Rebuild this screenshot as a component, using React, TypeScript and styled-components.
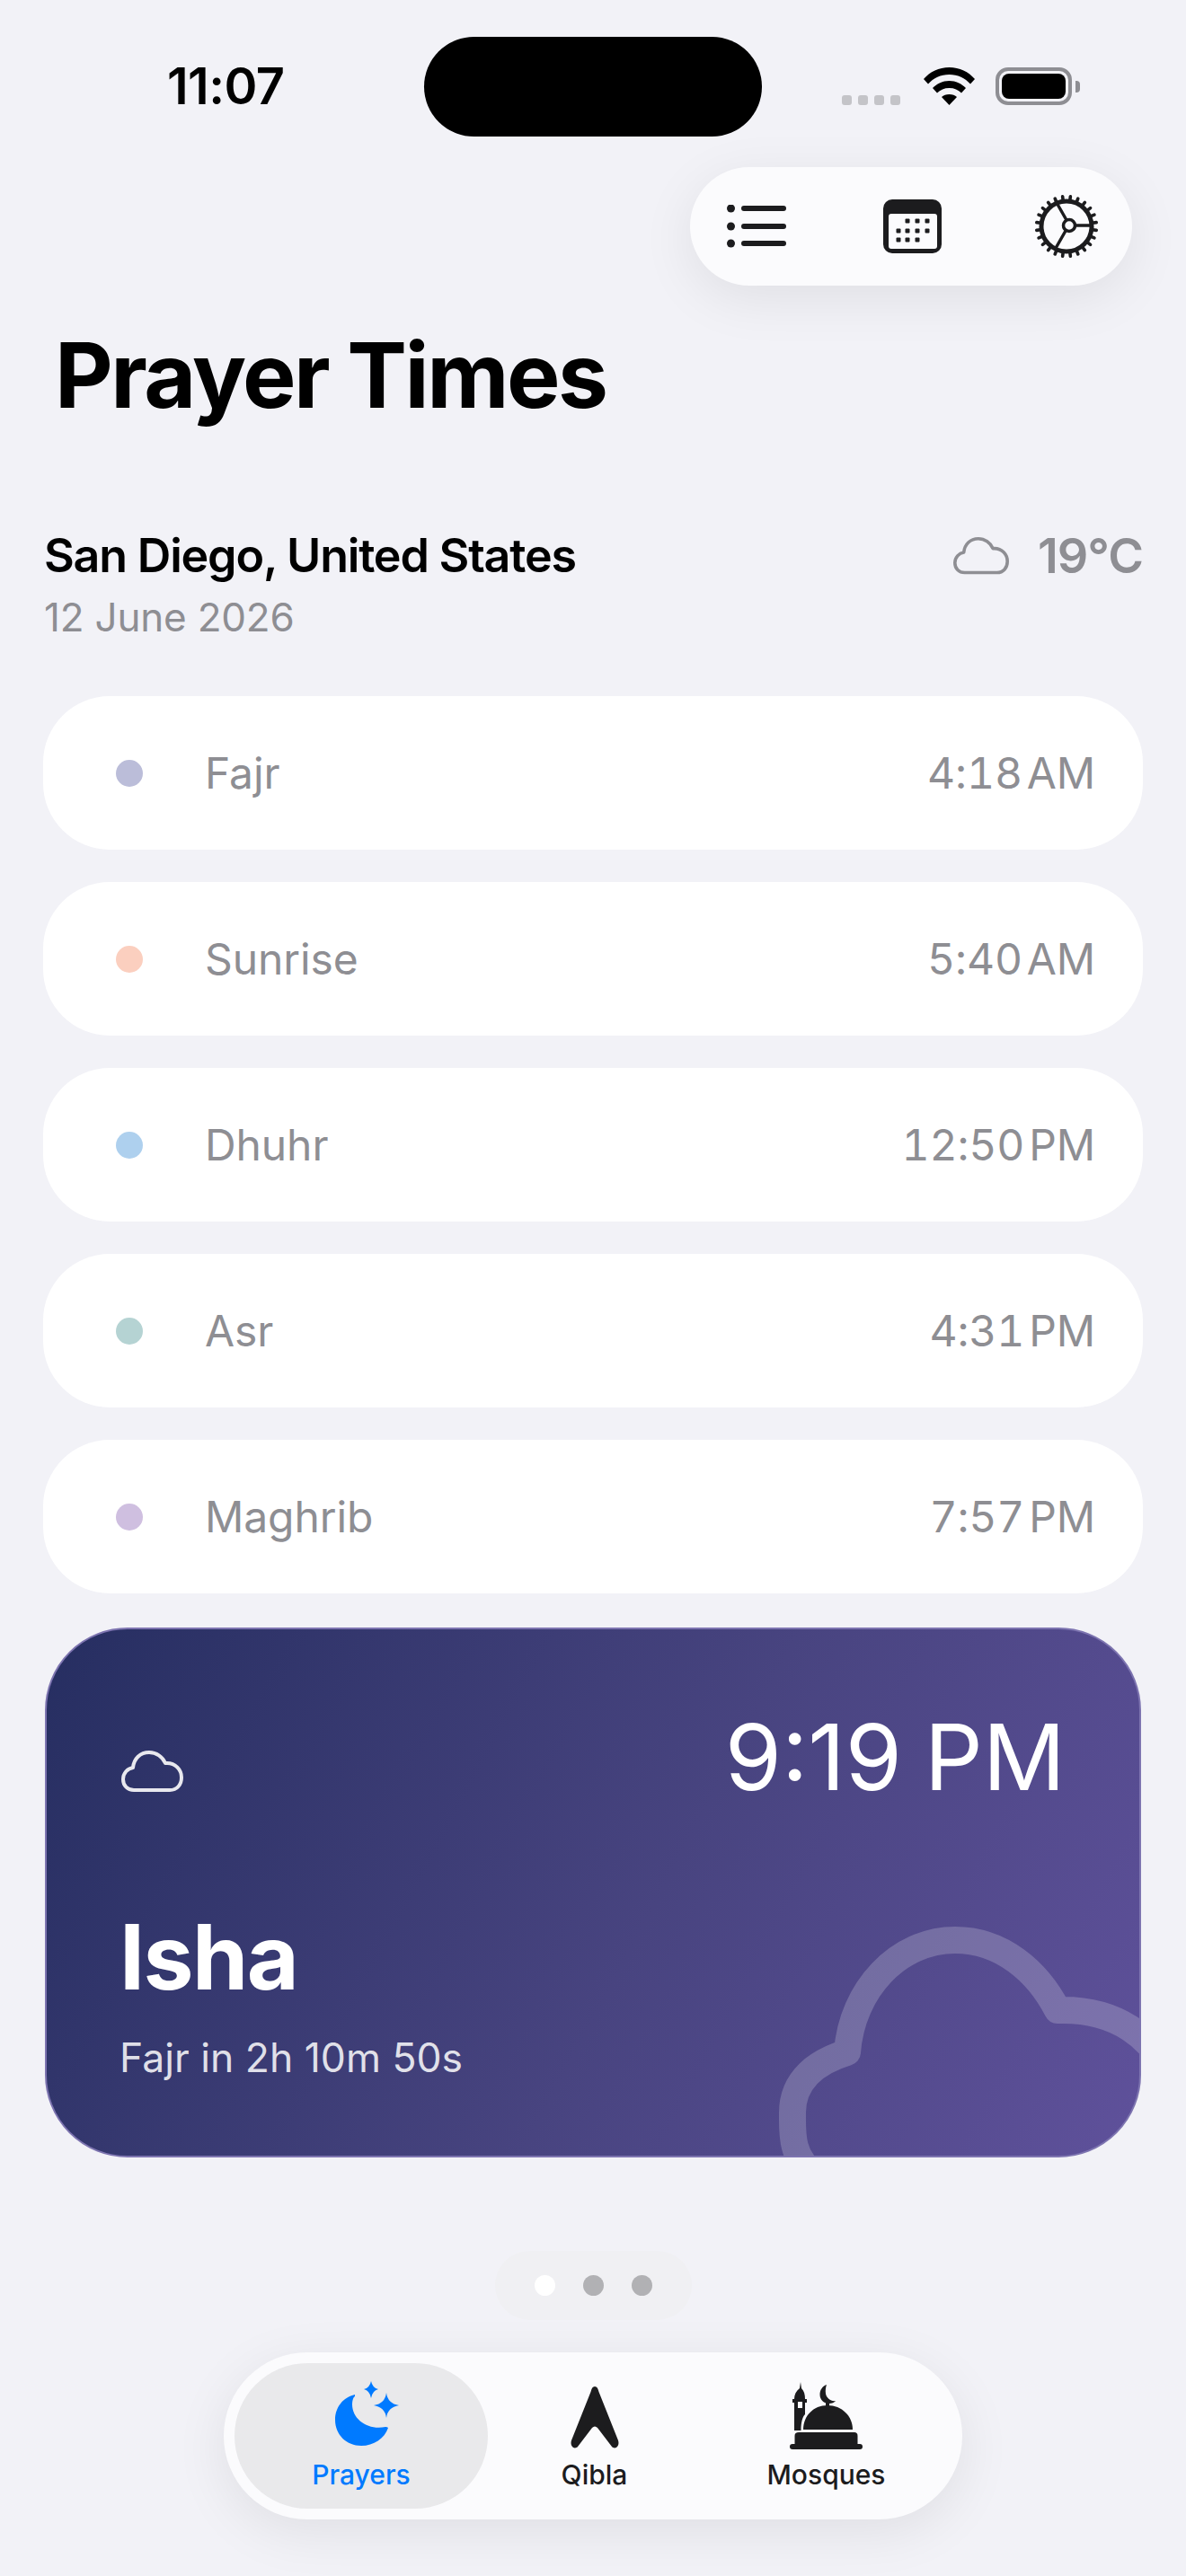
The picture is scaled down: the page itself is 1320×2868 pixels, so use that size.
import React from "react";
import styled, { createGlobalStyle } from "styled-components";

const Global = createGlobalStyle`
  html, body { margin: 0; padding: 0; background: #f2f2f7; }
  * { box-sizing: border-box; }
  #root { width: 1320px; }
`;

const Page = styled.div`
  width: 1320px;
  height: 2868px;
  overflow: hidden;
  background: #f2f2f7;
  font-family: Inter, "Liberation Sans", sans-serif;
  color: #000;
`;

const StatusBar = styled.header`
  display: flex;
  align-items: flex-start;
  height: 186px;
  padding: 41px 0 0 186px;
`;

const Clock = styled.div`
  width: 286px;
  margin-top: 28px;
  font-size: 56px;
  line-height: 54px;
  font-weight: 600;
  letter-spacing: -0.6px;
`;

const Island = styled.div`
  width: 376px;
  height: 111px;
  border-radius: 56px;
  background: #000;
`;

const StatusIcons = styled.div`
  display: flex;
  align-items: flex-end;
  margin: 34px 0 0 89px;
  height: 42px;
`;

const Signal = styled.div`
  display: flex;
  gap: 7px;
  margin-right: 26px;
`;

const SignalDot = styled.span`
  width: 11px;
  height: 11px;
  border-radius: 3px;
  background: #c4c4c8;
`;

const Battery = styled.div`
  position: relative;
  width: 85px;
  height: 42px;
  margin-left: 23px;
  padding: 3px;
  border: 4px solid #8e8e93;
  border-radius: 14px;
  &::after {
    content: "";
    position: absolute;
    right: -13px;
    top: 11px;
    width: 5px;
    height: 13px;
    border-radius: 0 4px 4px 0;
    background: #8e8e93;
  }
`;

const BatteryFill = styled.div`
  width: 100%;
  height: 100%;
  border-radius: 8px;
  background: #000;
`;

const ToolbarRow = styled.div`
  display: flex;
  justify-content: flex-end;
  padding-right: 60px;
`;

const Toolbar = styled.nav`
  display: grid;
  grid-template-columns: 148px 198px 146px;
  align-items: center;
  justify-items: center;
  width: 492px;
  height: 132px;
  border-radius: 66px;
  background: #fbfbfd;
  box-shadow: 0 14px 60px rgba(0, 0, 0, 0.08);
`;

const Title = styled.h1`
  margin: 33px 0 0 61px;
  font-size: 100px;
  line-height: 134px;
  font-weight: 700;
  letter-spacing: -2.5px;
`;

const LocationRow = styled.section`
  display: flex;
  justify-content: space-between;
  align-items: flex-start;
  margin-top: 104px;
  padding: 0 48px 0 49px;
`;

const City = styled.div`
  font-size: 52px;
  line-height: 60px;
  font-weight: 600;
  letter-spacing: -1.2px;
`;

const DateText = styled.div`
  margin-top: 11px;
  font-size: 44px;
  line-height: 54px;
  font-weight: 400;
  letter-spacing: -0.2px;
  color: #8e8e93;
`;

const Weather = styled.div`
  display: flex;
  align-items: center;
  gap: 32px;
  color: #8e8e93;
  font-size: 54px;
  line-height: 60px;
  font-weight: 600;
  letter-spacing: -1px;
`;

const PrayerList = styled.main`
  display: flex;
  flex-direction: column;
  gap: 36px;
  margin-top: 61px;
  padding: 0 48px;
`;

const Row = styled.div`
  display: flex;
  align-items: center;
  height: 171px;
  padding: 0 53px 0 81px;
  border-radius: 74px;
  background: #fff;
`;

const Dot = styled.span<{ $color: string }>`
  width: 30px;
  height: 30px;
  border-radius: 50%;
  background: ${(p) => p.$color};
`;

const RowName = styled.span`
  margin-left: 69px;
  flex: 1;
  font-size: 48px;
  letter-spacing: -0.1px;
  color: #8e8e93;
`;

const RowTime = styled.span`
  font-size: 48px;
  letter-spacing: -0.1px;
  color: #8e8e93;
  font-variant-numeric: tabular-nums;
  word-spacing: -8px;
`;

const Card = styled.section`
  position: relative;
  display: flex;
  flex-direction: column;
  height: 590px;
  margin: 38px 50px 0;
  padding: 81px 82px 0 81px;
  overflow: hidden;
  border: 2px solid #7d74b0;
  border-radius: 92px;
  background: linear-gradient(118deg, #262e61 0%, #484480 55%, #5f519b 100%);
  color: #fff;
`;

const CardTop = styled.div`
  display: flex;
  justify-content: space-between;
  align-items: flex-end;
`;

const CardCloud = styled.div`
  display: flex;
  margin: 0 0 22px 2px;
`;

const CardTime = styled.div`
  font-size: 102px;
  line-height: 122px;
  font-weight: 400;
  word-spacing: -4px;
`;

const CardName = styled.div`
  margin-top: 102px;
  font-size: 100px;
  line-height: 120px;
  font-weight: 700;
  letter-spacing: -1.5px;
`;

const CardNote = styled.div`
  margin-top: 25px;
  font-size: 44.5px;
  line-height: 54px;
  color: rgba(255, 255, 255, 0.85);
`;

const BigCloud = styled.svg`
  position: absolute;
  right: -2px;
  bottom: -2px;
`;

const PagerRow = styled.div`
  display: flex;
  justify-content: center;
  margin-top: 104px;
`;

const Pager = styled.div`
  display: flex;
  align-items: center;
  justify-content: center;
  gap: 31px;
  width: 219px;
  height: 77px;
  border-radius: 39px;
  background: #f0f0f3;
`;

const PagerDot = styled.span<{ $on?: boolean }>`
  width: 23px;
  height: 23px;
  border-radius: 50%;
  background: ${(p) => (p.$on ? "#ffffff" : "#b1b1b4")};
`;

const NavRow = styled.div`
  display: flex;
  justify-content: center;
  margin-top: 36px;
`;

const Nav = styled.nav`
  display: grid;
  grid-template-columns: 282px 237px 279px;
  align-items: stretch;
  width: 822px;
  height: 186px;
  padding: 12px;
  border-radius: 93px;
  background: #fbfbfd;
  box-shadow: 0 14px 60px rgba(0, 0, 0, 0.08);
`;

const Tab = styled.div<{ $active?: boolean }>`
  display: flex;
  flex-direction: column;
  align-items: center;
  padding-top: 16px;
  border-radius: 81px;
  background: ${(p) => (p.$active ? "#e9e9eb" : "transparent")};
  color: ${(p) => (p.$active ? "#007aff" : "#1c1c1e")};
`;

const TabIcon = styled.div`
  display: flex;
  align-items: flex-end;
  justify-content: center;
  height: 80px;
`;

const TabLabel = styled.div`
  margin-top: 9px;
  font-size: 30px;
  line-height: 38px;
  font-weight: 500;
`;

const Cloud = ({ size, color, sw }: { size: number; color: string; sw: number }) => (
  <svg width={size} height={(size * 46) / 69} viewBox="0 0 69 46" fill="none">
    <path
      d="M14 44H54C62 44 67 38 67 30C67 21 60 14 51 14H49C46 7 39 2 31 2C21 2 14 9 13 19C7 20 2 25 2 32C2 39 7 44 14 44Z"
      stroke={color}
      strokeWidth={sw}
      strokeLinejoin="round"
    />
  </svg>
);

const ListIcon = () => (
  <svg width="66" height="48" viewBox="0 0 66 48" fill="#1c1c1e">
    {[4, 24, 43].map((y) => (
      <g key={y}>
        <circle cx="4.5" cy={y} r="4.5" />
        <rect x="16" y={y - 3} width="50" height="6" rx="3" />
      </g>
    ))}
  </svg>
);

const CalendarIcon = () => {
  const rows: [number, number[]][] = [
    [24, [27, 38, 49]],
    [35, [17, 27, 38, 49]],
    [45, [17, 27, 38]],
  ];
  return (
    <svg width="65" height="60" viewBox="0 0 65 60">
      <rect width="65" height="60" rx="10" fill="#1c1c1e" />
      <rect x="6" y="16" width="54" height="39" rx="3" fill="#fbfbfd" />
      {rows.map(([y, xs]) =>
        xs.map((x) => (
          <rect key={`${x}-${y}`} x={x - 2.5} y={y - 2.5} width="5" height="5" rx="1" fill="#1c1c1e" />
        ))
      )}
    </svg>
  );
};

const GearIcon = () => {
  const teeth = Array.from({ length: 24 }, (_, i) => (i * 360) / 24);
  return (
    <svg width="74" height="74" viewBox="-37 -37 74 74" fill="none" stroke="#1c1c1e">
      <circle r="28" strokeWidth="5" />
      {teeth.map((a) => {
        const t = ((a + 7.5) * Math.PI) / 180;
        return (
          <line
            key={a}
            x1={29 * Math.cos(t)}
            y1={29 * Math.sin(t)}
            x2={33.5 * Math.cos(t)}
            y2={33.5 * Math.sin(t)}
            strokeWidth="3.6"
            strokeLinecap="round"
          />
        );
      })}
      <circle cx="3" cy="-1" r="6.5" strokeWidth="3.5" />
      <path d="M9.5 -1H27M0 -7L-12 -28M-1 5L-13 26" strokeWidth="3.5" />
    </svg>
  );
};

const WifiIcon = () => (
  <svg width="57" height="42" viewBox="0 0 57 42" fill="#000">
    <path d="M0 13C7 5 17 0 28.500 0S50 5 57 13L52 18.500C46 12 38 8 28.500 8S11 12 5 18.500Z" />
    <path d="M10 23C15 18 21 15 28.500 15S42 18 47 23L42 28.500C38.500 25 34 23 28.500 23S18.500 25 15 28.500Z" />
    <path d="M20 33C22 31 25 30 28.500 30S35 31 37 33L28.500 42Z" />
  </svg>
);

const MoonIcon = () => (
  <svg width="88" height="78" viewBox="-12 0 88 78" fill="#007aff">
    <path d="M25 17C12 20 3 31 3 45C3 62 16 74 32 74C46 74 58 66 62 54C61 53 60 53 59 53C40 57 22 45 22 28C22 24 23 20 25 19Z" />
    <path d="M43 2Q44.500 9.500 51 11Q44.500 12.500 43 21Q41.500 12.500 35 11Q41.500 9.500 43 2Z" />
    <path d="M60 15Q61.500 27 74 29Q61.500 31 60 43Q58.500 31 46 29Q58.500 27 60 15Z" />
  </svg>
);

const ArrowIcon = () => (
  <svg width="54" height="71" viewBox="0 0 54 71" fill="#1c1c1e">
    <path d="M27 1C29.500 1 30.500 3 31.500 7L53 61C55 67 50 72 46 68L30 47C28 45 26 45 24 47L8 68C4 72 -1 67 1 61L22.500 7C23.500 3 24.500 1 27 1Z" />
  </svg>
);

const MosqueIcon = () => (
  <svg width="81" height="75" viewBox="0 0 81 75" fill="#1c1c1e">
    <path d="M12 0L13 7C16 10 17 14 17 19H19V23H17V36C14 39 12.500 45 12.500 54H5V23H3V19H5C5 14 7 10 11 7Z" fillRule="evenodd" />
    <rect x="9" y="22" width="5" height="7" fill="#fbfbfd" />
    <path d="M41 3C36 5 33.500 9 33.500 14C33.500 20 38 24 44 24C47 24 49.500 23 51 21C46 22 41 18 40 13C39.500 9 40 6 41 3Z" />
    <rect x="40" y="23" width="4" height="5" />
    <path d="M15 53C15 38 26 26 42 26C58 26 70 38 70 53Z" />
    <path d="M10 56H72C74 56 75.500 57 75.500 60V69H5.500V60C5.500 57 7 56 10 56Z" />
    <rect x="0" y="69" width="81" height="6" rx="3" />
  </svg>
);

const prayers = [
  { name: "Fajr", time: "4:18 AM", color: "#bbbdd9" },
  { name: "Sunrise", time: "5:40 AM", color: "#fbcfbf" },
  { name: "Dhuhr", time: "12:50 PM", color: "#aed0ee" },
  { name: "Asr", time: "4:31 PM", color: "#b5d3d3" },
  { name: "Maghrib", time: "7:57 PM", color: "#cfbfe0" },
];

export default function App() {
  return (
    <Page>
      <Global />
      <StatusBar>
        <Clock>11:07</Clock>
        <Island />
        <StatusIcons>
          <Signal>
            <SignalDot />
            <SignalDot />
            <SignalDot />
            <SignalDot />
          </Signal>
          <WifiIcon />
          <Battery>
            <BatteryFill />
          </Battery>
        </StatusIcons>
      </StatusBar>

      <ToolbarRow>
        <Toolbar>
          <ListIcon />
          <CalendarIcon />
          <GearIcon />
        </Toolbar>
      </ToolbarRow>

      <Title>Prayer Times</Title>

      <LocationRow>
        <div>
          <City>San Diego, United States</City>
          <DateText>12 June 2026</DateText>
        </div>
        <Weather>
          <Cloud size={62} color="#8e8e93" sw={4} />
          19°C
        </Weather>
      </LocationRow>

      <PrayerList>
        {prayers.map((p) => (
          <Row key={p.name}>
            <Dot $color={p.color} />
            <RowName>{p.name}</RowName>
            <RowTime>{p.time}</RowTime>
          </Row>
        ))}
      </PrayerList>

      <Card>
        <CardTop>
          <CardCloud>
            <Cloud size={69} color="#e8e8ee" sw={4} />
          </CardCloud>
          <CardTime>9:19 PM</CardTime>
        </CardTop>
        <CardName>Isha</CardName>
        <CardNote>Fajr in 2h 10m 50s</CardNote>
        <BigCloud width="420" height="280" viewBox="850 2122 420 280" fill="none">
          <path
            d="M905 2420C880 2400 882 2375 882 2352C882 2315 910 2295 943 2285C948 2215 1000 2160 1063 2160C1115 2160 1155 2195 1177 2238H1183C1240 2238 1285 2265 1305 2320V2440H905Z"
            stroke="#fff"
            strokeOpacity="0.2"
            strokeWidth="30"
            strokeLinejoin="round"
          />
        </BigCloud>
      </Card>

      <PagerRow>
        <Pager>
          <PagerDot $on />
          <PagerDot />
          <PagerDot />
        </Pager>
      </PagerRow>

      <NavRow>
        <Nav>
          <Tab $active>
            <TabIcon>
              <MoonIcon />
            </TabIcon>
            <TabLabel>Prayers</TabLabel>
          </Tab>
          <Tab>
            <TabIcon>
              <ArrowIcon />
            </TabIcon>
            <TabLabel>Qibla</TabLabel>
          </Tab>
          <Tab>
            <TabIcon>
              <MosqueIcon />
            </TabIcon>
            <TabLabel>Mosques</TabLabel>
          </Tab>
        </Nav>
      </NavRow>
    </Page>
  );
}
